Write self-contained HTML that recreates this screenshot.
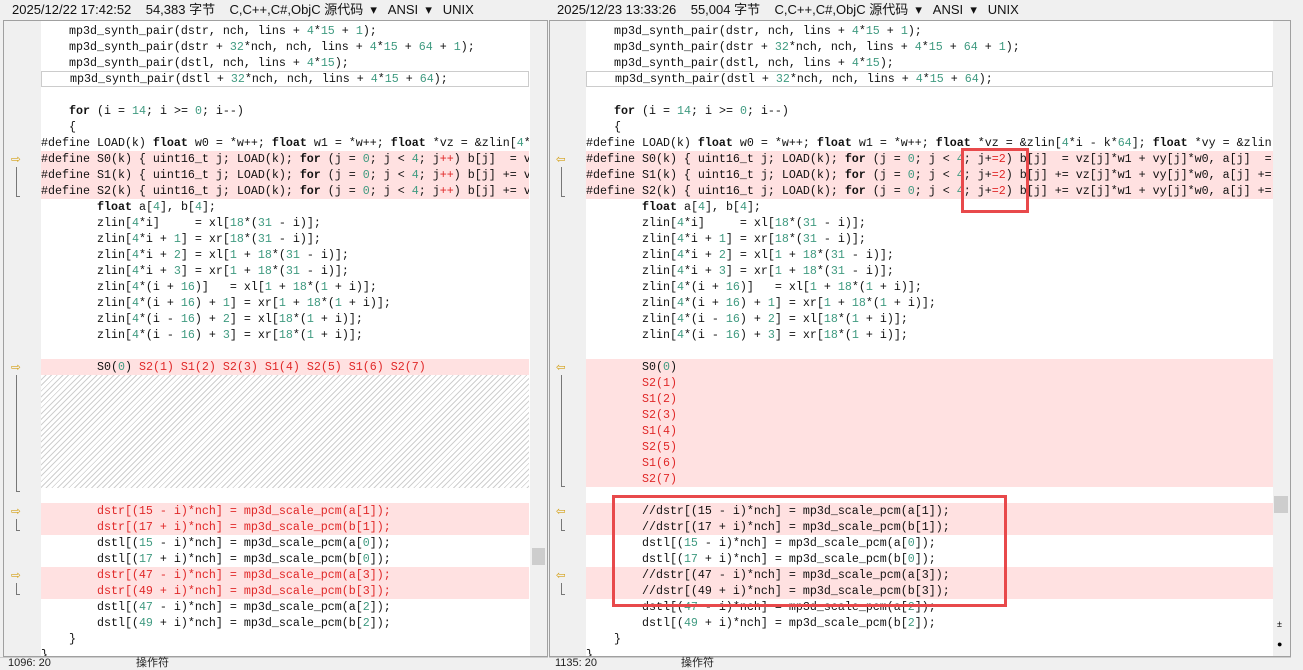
<!DOCTYPE html>
<html><head><meta charset="utf-8"><style>
*{margin:0;padding:0;box-sizing:border-box}
body{width:1303px;height:667px;overflow:hidden;background:#f0f0f0;font-family:"Liberation Sans","Noto Sans CJK SC",sans-serif;position:relative}
.hdr{position:absolute;top:0;height:20px;font-size:13px;line-height:20px;color:#111;white-space:pre}
.pane{position:absolute;top:20px;height:637px;background:#fff;border:1px solid #a0a0a0;overflow:hidden}
.gut{position:absolute;left:0;top:0;bottom:0;background:#f0f0f0}
.ln{position:absolute;height:16px;line-height:16px;font-family:"Liberation Mono",monospace;font-size:11.67px;white-space:pre;color:#111;overflow:hidden}
.pk{background:#ffe1e1}
.n{color:#3f9a80}.b{font-weight:bold}.r{color:#e02828}
.sb{position:absolute;top:0;bottom:0;width:17px;background:#f0f0f0}
.arr{position:absolute;width:14px;height:10px}
.st{position:absolute;top:657px;height:10px;background:#f0f0f0;border-top:1px solid #ccc;font-size:11px;line-height:14px;color:#222}
.box{position:absolute;border:3px solid #e8494b}
</style></head><body>
<div class="hdr" style="left:12px">2025/12/22 17:42:52    54,383 字节    C,C++,C#,ObjC 源代码  ▾   ANSI  ▾   UNIX</div>
<div class="hdr" style="left:557px">2025/12/23 13:33:26    55,004 字节    C,C++,C#,ObjC 源代码  ▾   ANSI  ▾   UNIX</div>

<!-- LEFT PANE -->
<div class="pane" style="left:3px;width:545px">
 <div class="gut" style="width:37px"></div>
 <div class="ln" style="left:37px;top:2px;width:488px">    mp3d_synth_pair(dstr, nch, lins + <span class="n">4</span>*<span class="n">15</span> + <span class="n">1</span>);</div>
 <div class="ln" style="left:37px;top:18px;width:488px">    mp3d_synth_pair(dstr + <span class="n">32</span>*nch, nch, lins + <span class="n">4</span>*<span class="n">15</span> + <span class="n">64</span> + <span class="n">1</span>);</div>
 <div class="ln" style="left:37px;top:34px;width:488px">    mp3d_synth_pair(dstl, nch, lins + <span class="n">4</span>*<span class="n">15</span>);</div>
 <div class="ln" style="left:37px;top:50px;width:488px;border:1px solid #ccc;line-height:14px">    mp3d_synth_pair(dstl + <span class="n">32</span>*nch, nch, lins + <span class="n">4</span>*<span class="n">15</span> + <span class="n">64</span>);</div>
 <div class="ln" style="left:37px;top:82px;width:488px">    <span class="b">for</span> (i = <span class="n">14</span>; i &gt;= <span class="n">0</span>; i--)</div>
 <div class="ln" style="left:37px;top:98px;width:488px">    {</div>
 <div class="ln" style="left:37px;top:114px;width:488px">#define LOAD(k) <span class="b">float</span> w0 = *w++; <span class="b">float</span> w1 = *w++; <span class="b">float</span> *vz = &amp;zlin[<span class="n">4</span>*</div>
 <div class="ln pk" style="left:37px;top:130px;width:488px">#define S0(k) { uint16_t j; LOAD(k); <span class="b">for</span> (j = <span class="n">0</span>; j &lt; <span class="n">4</span>; j<span class="r">++</span>) b[j]  = v</div>
 <div class="ln pk" style="left:37px;top:146px;width:488px">#define S1(k) { uint16_t j; LOAD(k); <span class="b">for</span> (j = <span class="n">0</span>; j &lt; <span class="n">4</span>; j<span class="r">++</span>) b[j] += v</div>
 <div class="ln pk" style="left:37px;top:162px;width:488px">#define S2(k) { uint16_t j; LOAD(k); <span class="b">for</span> (j = <span class="n">0</span>; j &lt; <span class="n">4</span>; j<span class="r">++</span>) b[j] += v</div>
 <div class="ln" style="left:37px;top:178px;width:488px">        <span class="b">float</span> a[<span class="n">4</span>], b[<span class="n">4</span>];</div>
 <div class="ln" style="left:37px;top:194px;width:488px">        zlin[<span class="n">4</span>*i]     = xl[<span class="n">18</span>*(<span class="n">31</span> - i)];</div>
 <div class="ln" style="left:37px;top:210px;width:488px">        zlin[<span class="n">4</span>*i + <span class="n">1</span>] = xr[<span class="n">18</span>*(<span class="n">31</span> - i)];</div>
 <div class="ln" style="left:37px;top:226px;width:488px">        zlin[<span class="n">4</span>*i + <span class="n">2</span>] = xl[<span class="n">1</span> + <span class="n">18</span>*(<span class="n">31</span> - i)];</div>
 <div class="ln" style="left:37px;top:242px;width:488px">        zlin[<span class="n">4</span>*i + <span class="n">3</span>] = xr[<span class="n">1</span> + <span class="n">18</span>*(<span class="n">31</span> - i)];</div>
 <div class="ln" style="left:37px;top:258px;width:488px">        zlin[<span class="n">4</span>*(i + <span class="n">16</span>)]   = xl[<span class="n">1</span> + <span class="n">18</span>*(<span class="n">1</span> + i)];</div>
 <div class="ln" style="left:37px;top:274px;width:488px">        zlin[<span class="n">4</span>*(i + <span class="n">16</span>) + <span class="n">1</span>] = xr[<span class="n">1</span> + <span class="n">18</span>*(<span class="n">1</span> + i)];</div>
 <div class="ln" style="left:37px;top:290px;width:488px">        zlin[<span class="n">4</span>*(i - <span class="n">16</span>) + <span class="n">2</span>] = xl[<span class="n">18</span>*(<span class="n">1</span> + i)];</div>
 <div class="ln" style="left:37px;top:306px;width:488px">        zlin[<span class="n">4</span>*(i - <span class="n">16</span>) + <span class="n">3</span>] = xr[<span class="n">18</span>*(<span class="n">1</span> + i)];</div>
 <div class="ln pk" style="left:37px;top:338px;width:488px">        S0(<span class="n">0</span>) <span class="r">S2(1) S1(2) S2(3) S1(4) S2(5) S1(6) S2(7)</span></div>
 <div style="position:absolute;left:37px;top:354px;width:488px;height:113px;background:repeating-linear-gradient(135deg,#fff 0 3px,#cfcfcf 3px 4px)"></div>
 <div class="ln pk r" style="left:37px;top:482px;width:488px">        dstr[(15 - i)*nch] = mp3d_scale_pcm(a[1]);</div>
 <div class="ln pk r" style="left:37px;top:498px;width:488px">        dstr[(17 + i)*nch] = mp3d_scale_pcm(b[1]);</div>
 <div class="ln" style="left:37px;top:514px;width:488px">        dstl[(<span class="n">15</span> - i)*nch] = mp3d_scale_pcm(a[<span class="n">0</span>]);</div>
 <div class="ln" style="left:37px;top:530px;width:488px">        dstl[(<span class="n">17</span> + i)*nch] = mp3d_scale_pcm(b[<span class="n">0</span>]);</div>
 <div class="ln pk r" style="left:37px;top:546px;width:488px">        dstr[(47 - i)*nch] = mp3d_scale_pcm(a[3]);</div>
 <div class="ln pk r" style="left:37px;top:562px;width:488px">        dstr[(49 + i)*nch] = mp3d_scale_pcm(b[3]);</div>
 <div class="ln" style="left:37px;top:578px;width:488px">        dstl[(<span class="n">47</span> - i)*nch] = mp3d_scale_pcm(a[<span class="n">2</span>]);</div>
 <div class="ln" style="left:37px;top:594px;width:488px">        dstl[(<span class="n">49</span> + i)*nch] = mp3d_scale_pcm(b[<span class="n">2</span>]);</div>
 <div class="ln" style="left:37px;top:610px;width:488px">    }</div>
 <div class="ln" style="left:37px;top:626px;width:488px">}</div>
 <div class="sb" style="left:526px"><div style="position:absolute;left:2px;top:527px;width:13px;height:17px;background:#cdcdcd"></div></div>
 <div class="ln" style="left:7px;top:130px;color:#d4a017;font-family:'DejaVu Sans'">⇨</div>
 <div class="ln" style="left:7px;top:338px;color:#d4a017;font-family:'DejaVu Sans'">⇨</div>
 <div class="ln" style="left:7px;top:482px;color:#d4a017;font-family:'DejaVu Sans'">⇨</div>
 <div class="ln" style="left:7px;top:546px;color:#d4a017;font-family:'DejaVu Sans'">⇨</div>
 <div style="position:absolute;left:12px;top:146px;width:4px;height:30px;border-left:1px solid #777;border-bottom:1px solid #777"></div>
 <div style="position:absolute;left:12px;top:354px;width:4px;height:117px;border-left:1px solid #777;border-bottom:1px solid #777"></div>
 <div style="position:absolute;left:12px;top:498px;width:4px;height:12px;border-left:1px solid #777;border-bottom:1px solid #777"></div>
 <div style="position:absolute;left:12px;top:562px;width:4px;height:12px;border-left:1px solid #777;border-bottom:1px solid #777"></div>
</div>

<!-- RIGHT PANE -->
<div class="pane" style="left:549px;width:742px">
 <div class="gut" style="width:36px"></div>
 <div class="ln" style="left:36px;top:2px;width:687px">    mp3d_synth_pair(dstr, nch, lins + <span class="n">4</span>*<span class="n">15</span> + <span class="n">1</span>);</div>
 <div class="ln" style="left:36px;top:18px;width:687px">    mp3d_synth_pair(dstr + <span class="n">32</span>*nch, nch, lins + <span class="n">4</span>*<span class="n">15</span> + <span class="n">64</span> + <span class="n">1</span>);</div>
 <div class="ln" style="left:36px;top:34px;width:687px">    mp3d_synth_pair(dstl, nch, lins + <span class="n">4</span>*<span class="n">15</span>);</div>
 <div class="ln" style="left:36px;top:50px;width:687px;border:1px solid #ccc;line-height:14px">    mp3d_synth_pair(dstl + <span class="n">32</span>*nch, nch, lins + <span class="n">4</span>*<span class="n">15</span> + <span class="n">64</span>);</div>
 <div class="ln" style="left:36px;top:82px;width:687px">    <span class="b">for</span> (i = <span class="n">14</span>; i &gt;= <span class="n">0</span>; i--)</div>
 <div class="ln" style="left:36px;top:98px;width:687px">    {</div>
 <div class="ln" style="left:36px;top:114px;width:687px">#define LOAD(k) <span class="b">float</span> w0 = *w++; <span class="b">float</span> w1 = *w++; <span class="b">float</span> *vz = &amp;zlin[<span class="n">4</span>*i - k*<span class="n">64</span>]; <span class="b">float</span> *vy = &amp;zlin</div>
 <div class="ln pk" style="left:36px;top:130px;width:687px">#define S0(k) { uint16_t j; LOAD(k); <span class="b">for</span> (j = <span class="n">0</span>; j &lt; <span class="n">4</span>; j+<span class="r">=2</span>) b[j]  = vz[j]*w1 + vy[j]*w0, a[j]  =</div>
 <div class="ln pk" style="left:36px;top:146px;width:687px">#define S1(k) { uint16_t j; LOAD(k); <span class="b">for</span> (j = <span class="n">0</span>; j &lt; <span class="n">4</span>; j+<span class="r">=2</span>) b[j] += vz[j]*w1 + vy[j]*w0, a[j] +=</div>
 <div class="ln pk" style="left:36px;top:162px;width:687px">#define S2(k) { uint16_t j; LOAD(k); <span class="b">for</span> (j = <span class="n">0</span>; j &lt; <span class="n">4</span>; j+<span class="r">=2</span>) b[j] += vz[j]*w1 + vy[j]*w0, a[j] +=</div>
 <div class="ln" style="left:36px;top:178px;width:687px">        <span class="b">float</span> a[<span class="n">4</span>], b[<span class="n">4</span>];</div>
 <div class="ln" style="left:36px;top:194px;width:687px">        zlin[<span class="n">4</span>*i]     = xl[<span class="n">18</span>*(<span class="n">31</span> - i)];</div>
 <div class="ln" style="left:36px;top:210px;width:687px">        zlin[<span class="n">4</span>*i + <span class="n">1</span>] = xr[<span class="n">18</span>*(<span class="n">31</span> - i)];</div>
 <div class="ln" style="left:36px;top:226px;width:687px">        zlin[<span class="n">4</span>*i + <span class="n">2</span>] = xl[<span class="n">1</span> + <span class="n">18</span>*(<span class="n">31</span> - i)];</div>
 <div class="ln" style="left:36px;top:242px;width:687px">        zlin[<span class="n">4</span>*i + <span class="n">3</span>] = xr[<span class="n">1</span> + <span class="n">18</span>*(<span class="n">31</span> - i)];</div>
 <div class="ln" style="left:36px;top:258px;width:687px">        zlin[<span class="n">4</span>*(i + <span class="n">16</span>)]   = xl[<span class="n">1</span> + <span class="n">18</span>*(<span class="n">1</span> + i)];</div>
 <div class="ln" style="left:36px;top:274px;width:687px">        zlin[<span class="n">4</span>*(i + <span class="n">16</span>) + <span class="n">1</span>] = xr[<span class="n">1</span> + <span class="n">18</span>*(<span class="n">1</span> + i)];</div>
 <div class="ln" style="left:36px;top:290px;width:687px">        zlin[<span class="n">4</span>*(i - <span class="n">16</span>) + <span class="n">2</span>] = xl[<span class="n">18</span>*(<span class="n">1</span> + i)];</div>
 <div class="ln" style="left:36px;top:306px;width:687px">        zlin[<span class="n">4</span>*(i - <span class="n">16</span>) + <span class="n">3</span>] = xr[<span class="n">18</span>*(<span class="n">1</span> + i)];</div>
 <div class="ln pk" style="left:36px;top:338px;width:687px">        S0(<span class="n">0</span>)</div>
 <div class="ln pk r" style="left:36px;top:354px;width:687px">        S2(1)</div>
 <div class="ln pk r" style="left:36px;top:370px;width:687px">        S1(2)</div>
 <div class="ln pk r" style="left:36px;top:386px;width:687px">        S2(3)</div>
 <div class="ln pk r" style="left:36px;top:402px;width:687px">        S1(4)</div>
 <div class="ln pk r" style="left:36px;top:418px;width:687px">        S2(5)</div>
 <div class="ln pk r" style="left:36px;top:434px;width:687px">        S1(6)</div>
 <div class="ln pk r" style="left:36px;top:450px;width:687px">        S2(7)</div>
 <div class="ln pk" style="left:36px;top:482px;width:687px">        //dstr[(15 - i)*nch] = mp3d_scale_pcm(a[1]);</div>
 <div class="ln pk" style="left:36px;top:498px;width:687px">        //dstr[(17 + i)*nch] = mp3d_scale_pcm(b[1]);</div>
 <div class="ln" style="left:36px;top:514px;width:687px">        dstl[(<span class="n">15</span> - i)*nch] = mp3d_scale_pcm(a[<span class="n">0</span>]);</div>
 <div class="ln" style="left:36px;top:530px;width:687px">        dstl[(<span class="n">17</span> + i)*nch] = mp3d_scale_pcm(b[<span class="n">0</span>]);</div>
 <div class="ln pk" style="left:36px;top:546px;width:687px">        //dstr[(47 - i)*nch] = mp3d_scale_pcm(a[3]);</div>
 <div class="ln pk" style="left:36px;top:562px;width:687px">        //dstr[(49 + i)*nch] = mp3d_scale_pcm(b[3]);</div>
 <div class="ln" style="left:36px;top:578px;width:687px">        dstl[(<span class="n">47</span> - i)*nch] = mp3d_scale_pcm(a[<span class="n">2</span>]);</div>
 <div class="ln" style="left:36px;top:594px;width:687px">        dstl[(<span class="n">49</span> + i)*nch] = mp3d_scale_pcm(b[<span class="n">2</span>]);</div>
 <div class="ln" style="left:36px;top:610px;width:687px">    }</div>
 <div class="ln" style="left:36px;top:626px;width:687px">}</div>
 <div class="sb" style="left:723px"><div style="position:absolute;left:1px;top:475px;width:14px;height:17px;background:#cdcdcd"></div>
  <div style="position:absolute;left:4px;top:598px;font-size:9px">±</div><div style="position:absolute;left:4px;top:618px;font-size:9px">●</div></div>
 <div class="ln" style="left:6px;top:130px;color:#d4a017;font-family:'DejaVu Sans'">⇦</div>
 <div class="ln" style="left:6px;top:338px;color:#d4a017;font-family:'DejaVu Sans'">⇦</div>
 <div class="ln" style="left:6px;top:482px;color:#d4a017;font-family:'DejaVu Sans'">⇦</div>
 <div class="ln" style="left:6px;top:546px;color:#d4a017;font-family:'DejaVu Sans'">⇦</div>
 <div style="position:absolute;left:11px;top:146px;width:4px;height:30px;border-left:1px solid #777;border-bottom:1px solid #777"></div>
 <div style="position:absolute;left:11px;top:354px;width:4px;height:112px;border-left:1px solid #777;border-bottom:1px solid #777"></div>
 <div style="position:absolute;left:11px;top:498px;width:4px;height:12px;border-left:1px solid #777;border-bottom:1px solid #777"></div>
 <div style="position:absolute;left:11px;top:562px;width:4px;height:12px;border-left:1px solid #777;border-bottom:1px solid #777"></div>
</div>

<div class="box" style="left:961px;top:148px;width:68px;height:65px"></div>
<div class="box" style="left:612px;top:495px;width:395px;height:112px"></div>

<div class="st" style="left:0;width:548px"><span style="position:absolute;left:8px;top:-2px">1096: 20</span><span style="position:absolute;left:136px;top:-2px">操作符</span></div>
<div class="st" style="left:549px;width:742px"><span style="position:absolute;left:6px;top:-2px">1135: 20</span><span style="position:absolute;left:132px;top:-2px">操作符</span></div>
</body></html>
